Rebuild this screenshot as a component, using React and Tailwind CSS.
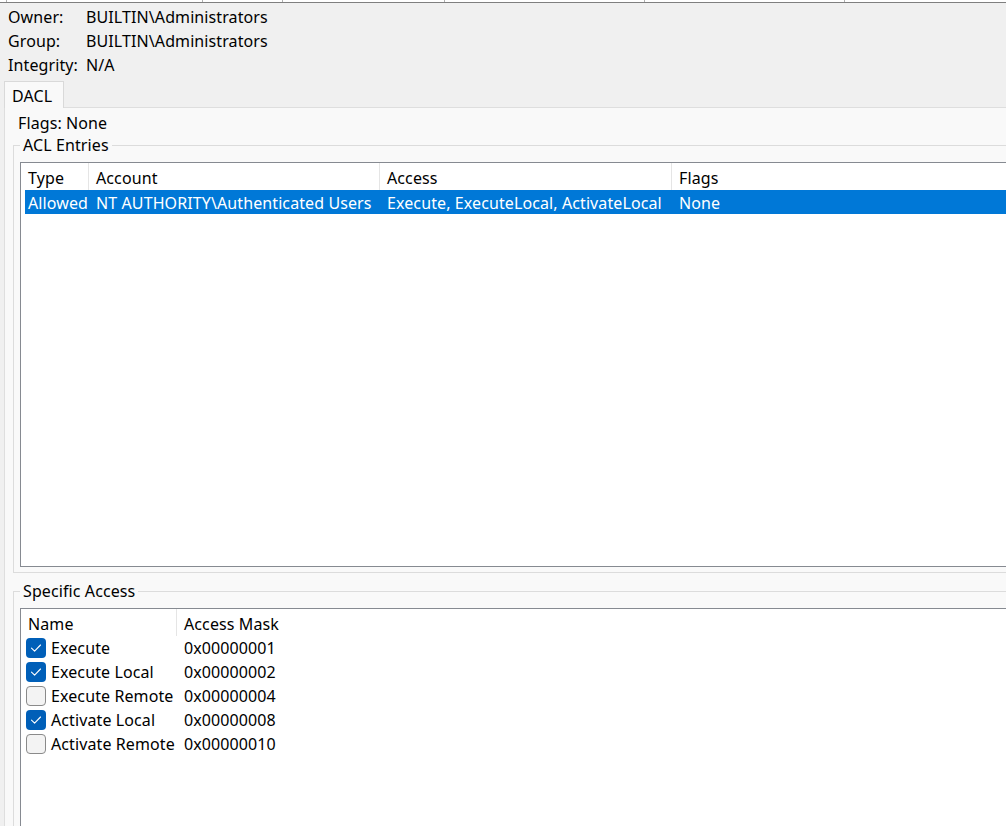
import React from 'react'

const aclColumns = [
  { label: 'Type', width: 'w-[68px]' },
  { label: 'Account', width: 'w-[291px]' },
  { label: 'Access', width: 'w-[292px]' },
  { label: 'Flags', width: 'w-[340px]' },
]

const accessRows = [
  { name: 'Execute', mask: '0x00000001', checked: true },
  { name: 'Execute Local', mask: '0x00000002', checked: true },
  { name: 'Execute Remote', mask: '0x00000004', checked: false },
  { name: 'Activate Local', mask: '0x00000008', checked: true },
  { name: 'Activate Remote', mask: '0x00000010', checked: false },
]

function CheckBox({ checked }) {
  if (checked) {
    return (
      <span className="flex h-[20px] w-[20px] shrink-0 items-center justify-center rounded-[4px] bg-[#005fb8]">
        <svg width="20" height="20" viewBox="0 0 20 20" fill="none">
          <path d="M5.5 10.2 L8.6 13.2 L14.5 7" stroke="white" strokeWidth="1.1" strokeLinecap="round" strokeLinejoin="round" />
        </svg>
      </span>
    )
  }
  return <span className="h-[20px] w-[20px] shrink-0 rounded-[4px] border border-[#8a8a8a] bg-[#f3f3f3]" />
}

function HeaderCell({ label, width, last }) {
  return (
    <div className={`${width} flex h-full shrink-0 items-center pl-[7px] pt-[2px] ${last ? '' : 'border-r border-[#e5e5e5]'}`}>
      {label}
    </div>
  )
}

export default function App() {
  return (
    <div className="h-[826px] w-[1006px] overflow-hidden bg-[#f0f0f0] text-[16px] leading-[18px] tracking-[0.1px] text-black font-['Noto_Sans',sans-serif]">
      {/* cut-off list above */}
      <div className="flex h-[3px] border-b border-[#7f7f7f] bg-white">
        <div className="w-[7px] border-r border-[#b0b0b0]" />
        <div className="w-[196px] border-r border-[#b0b0b0]" />
        <div className="w-[80px] border-r border-[#b0b0b0]" />
        <div className="w-[162px] border-r border-[#b0b0b0]" />
        <div className="w-[200px] border-r border-[#b0b0b0]" />
        <div className="w-[200px] border-r border-[#b0b0b0]" />
      </div>

      <div className="pl-[8px] pt-[1px]">
        {[
          ['Owner:', 'BUILTIN\\Administrators'],
          ['Group:', 'BUILTIN\\Administrators'],
          ['Integrity:', 'N/A'],
        ].map(([k, v]) => (
          <div key={k} className="flex h-[24px] items-center pt-[2px]">
            <span className="w-[78px]">{k}</span>
            <span>{v}</span>
          </div>
        ))}
      </div>

      <div className="mt-[5px] flex pl-[4px]">
        <div className="relative z-10 -mb-px flex h-[27px] w-[60px] items-center border border-b-0 border-[#d9d9d9] bg-[#f9f9f9] pl-[7px] pt-[2px]">
          DACL
        </div>
      </div>

      <div className="ml-[4px] h-[760px] border-l border-t border-[#dedede] bg-[#f9f9f9] pt-[6px]">
        <div className="pl-[13px]">Flags: None</div>

        <fieldset className="ml-[8px] mt-[5px] w-[1010px] border border-[#dcdcdc] pb-[5px] pl-[6px]">
          <legend className="px-[3px] leading-[17px]">ACL Entries</legend>
          <div className="mt-[8px] h-[405px] border border-[#868a91] bg-white">
            <div className="flex h-[27px]">
              {aclColumns.map((c, i) => (
                <HeaderCell key={c.label} label={c.label} width={c.width} last={i === aclColumns.length - 1} />
              ))}
            </div>
            <div className="ml-[4px] flex h-[24px] items-center bg-[#0078d7] pt-[2px] text-white">
              <div className="w-[64px] shrink-0 pl-[3px]">Allowed</div>
              <div className="w-[291px] shrink-0 pl-[7px]">NT AUTHORITY\Authenticated Users</div>
              <div className="w-[292px] shrink-0 pl-[7px]">Execute, ExecuteLocal, ActivateLocal</div>
              <div className="pl-[7px]">None</div>
            </div>
          </div>
        </fieldset>

        <fieldset className="ml-[8px] mt-[10px] w-[1010px] border border-[#dcdcdc] pl-[6px]">
          <legend className="px-[3px] leading-[17px]">Specific Access</legend>
          <div className="mt-[8px] h-[260px] border border-[#868a91] bg-white">
            <div className="flex h-[27px]">
              <HeaderCell label="Name" width="w-[156px]" />
              <HeaderCell label="Access Mask" width="w-[500px]" last />
            </div>
            {accessRows.map(r => (
              <div key={r.mask} className="flex h-[24px] items-center">
                <div className="flex w-[156px] shrink-0 items-center gap-[5px] pl-[5px]">
                  <CheckBox checked={r.checked} />
                  <span className="whitespace-nowrap">{r.name}</span>
                </div>
                <div className="pl-[7px]">{r.mask}</div>
              </div>
            ))}
          </div>
        </fieldset>
      </div>
    </div>
  )
}
